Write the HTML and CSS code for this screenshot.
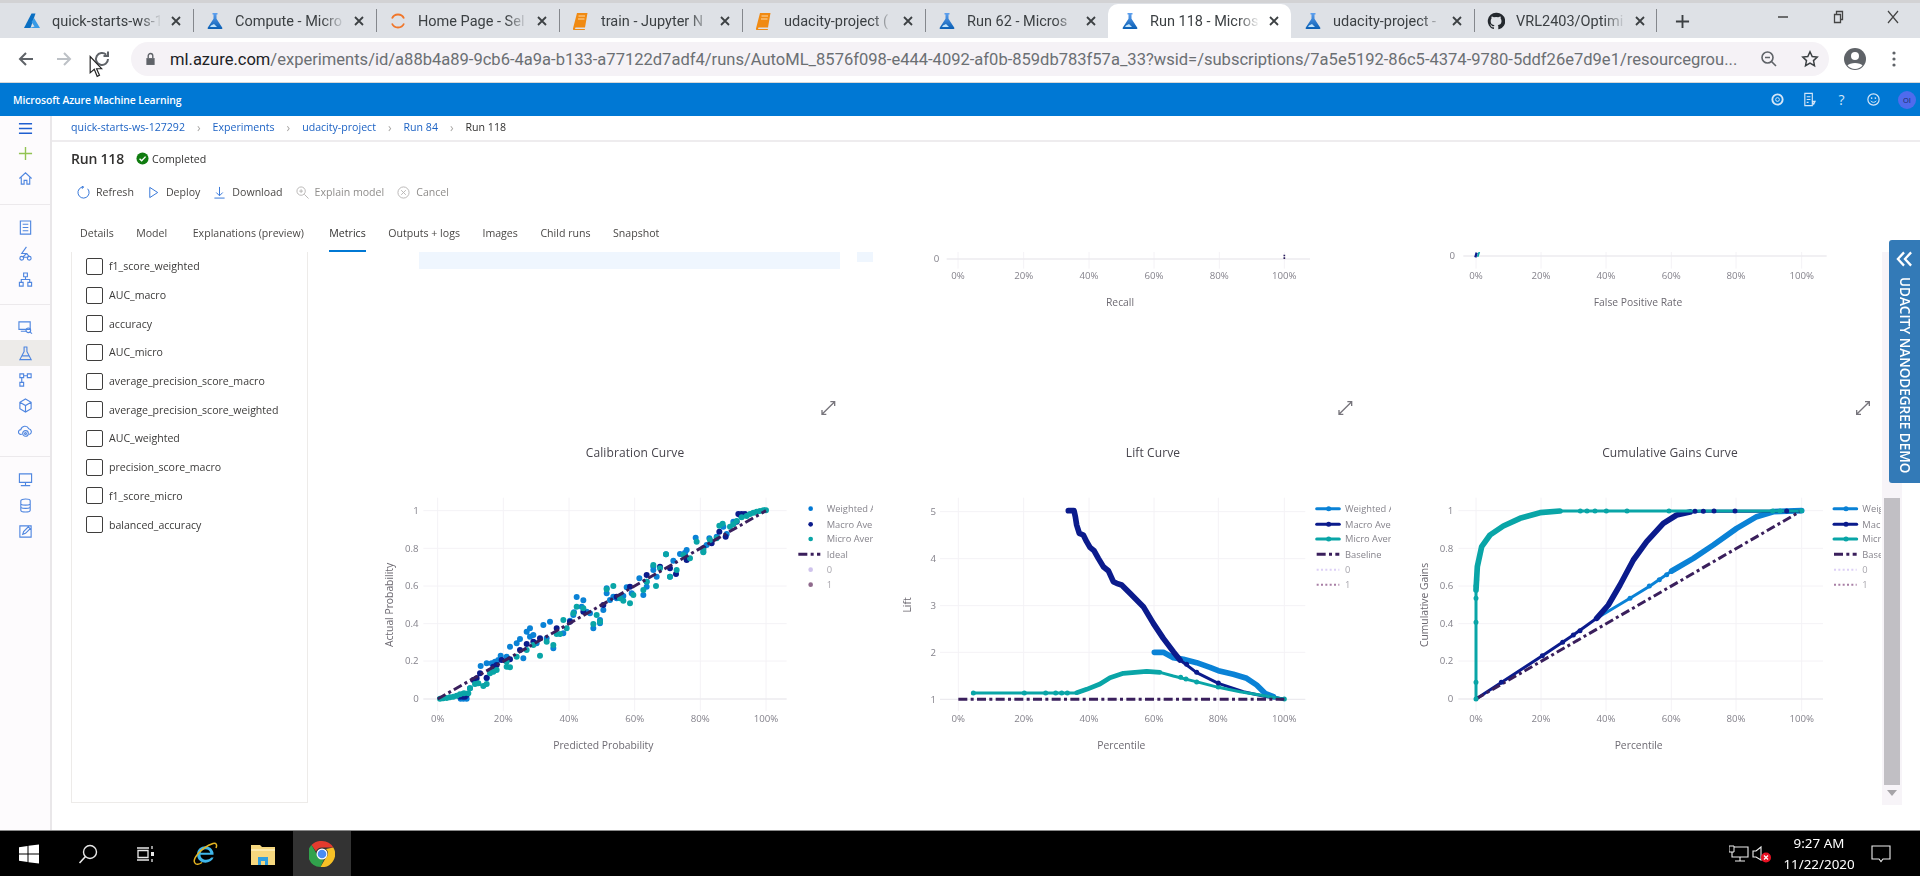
FILE: index.html
```html
<!DOCTYPE html>
<html lang="en">
<head>
<meta charset="utf-8">
<title>Run 118 - Microsoft Azure Machine Learning</title>
<link rel="stylesheet" href="styles.css">
</head>
<body>
<svg class="defs" width="0" height="0" aria-hidden="true">
  <defs>
    <linearGradient id="flaskGrad" x1="0" y1="0" x2="0" y2="1"><stop offset="0" stop-color="#5ea0ef"/><stop offset="1" stop-color="#0a5fb4"/></linearGradient>
    <symbol id="flask" viewBox="0 0 18 18"><path d="M6.500 1h5v1.500h-1v4.200l5.800 9.100c.4.700 0 1.200-.7 1.200H2.400c-.7 0-1.100-.5-.7-1.200l5.800-9.100V2.500h-1z" fill="url(#flaskGrad)"/><path d="M5 13.500l3-1.500 3 3H4z" fill="#bfe3fb"/></symbol>
    <symbol id="book" viewBox="0 0 18 18"><path d="M5 1h10.500l-2.500 14.500H3.500L3 17h10l-.3 1H2c-.8 0-1.200-.6-1-1.500z" fill="#f08a12"/><path d="M6.500 4h6.500M6 7h6.500" stroke="#ffd9a6" stroke-width="1.200"/></symbol>
    <symbol id="close" viewBox="0 0 12 12"><path d="M2 2l8 8M10 2l-8 8" stroke="#3c4043" stroke-width="1.800" fill="none"/></symbol>
  </defs>
</svg>
<div class="screen">
  <div class="tabstrip">
    <div class="tab"><svg class="tab-icon" viewBox="0 0 18 18"><path d="M8.500 1.500h4l-5 14.500H1z" fill="#0a6fc2"/><path d="M11 6l6 10H6.500l5-1.500-3-4.500z" fill="#3a9be6"/></svg><span class="tab-title">quick-starts-ws-1</span><svg class="tab-close"><use href="#close"/></svg></div>
    <div class="tab sep"><svg class="tab-icon"><use href="#flask"/></svg><span class="tab-title">Compute - Micro</span><svg class="tab-close"><use href="#close"/></svg></div>
    <div class="tab sep"><svg class="tab-icon" viewBox="0 0 18 18"><path d="M3 6.500a6.500 6.500 0 0 1 12 0M15 11.500a6.500 6.500 0 0 1-12 0" fill="none" stroke="#f0762a" stroke-width="1.800"/></svg><span class="tab-title">Home Page - Sel</span><svg class="tab-close"><use href="#close"/></svg></div>
    <div class="tab sep"><svg class="tab-icon"><use href="#book"/></svg><span class="tab-title">train - Jupyter N</span><svg class="tab-close"><use href="#close"/></svg></div>
    <div class="tab sep"><svg class="tab-icon"><use href="#book"/></svg><span class="tab-title">udacity-project (</span><svg class="tab-close"><use href="#close"/></svg></div>
    <div class="tab sep"><svg class="tab-icon"><use href="#flask"/></svg><span class="tab-title">Run 62 - Micros</span><svg class="tab-close"><use href="#close"/></svg></div>
    <div class="tab active"><svg class="tab-icon"><use href="#flask"/></svg><span class="tab-title">Run 118 - Micros</span><svg class="tab-close"><use href="#close"/></svg></div>
    <div class="tab"><svg class="tab-icon"><use href="#flask"/></svg><span class="tab-title">udacity-project -</span><svg class="tab-close"><use href="#close"/></svg></div>
    <div class="tab sep after"><svg class="tab-icon" viewBox="0 0 18 18"><path d="M9 .8a8.400 8.400 0 0 0-2.700 16.300c.4.100.6-.2.6-.4v-1.500c-2.300.5-2.800-1-2.800-1-.4-1-.9-1.200-.9-1.200-.8-.5.100-.5.100-.5.800.100 1.300.9 1.300.9.700 1.300 1.900.9 2.400.7.100-.5.300-.9.500-1.100-1.900-.2-3.800-.9-3.800-4.100 0-.9.300-1.700.9-2.300-.1-.2-.4-1.100.1-2.200 0 0 .7-.2 2.300.9a8 8 0 0 1 4.200 0c1.600-1.100 2.300-.9 2.300-.9.500 1.100.2 2 .1 2.200.5.600.9 1.400.9 2.300 0 3.200-2 3.900-3.800 4.100.3.300.6.800.6 1.600v2.300c0 .2.200.5.600.4A8.400 8.400 0 0 0 9 .8z" fill="#24292e"/></svg><span class="tab-title">VRL2403/Optimi</span><svg class="tab-close"><use href="#close"/></svg></div>
    <svg class="newtab" viewBox="0 0 16 16"><path d="M8 1v14M1 8h14" stroke="#3c4043" stroke-width="2"/></svg>
    <div class="winctl">
      <svg viewBox="0 0 14 14"><path d="M2 7h10" stroke="#444" stroke-width="1.500"/></svg>
      <svg viewBox="0 0 14 14"><path d="M3.500 4.500h6v8h-6zM5.500 4.500v-3h6v8h-2" fill="none" stroke="#444" stroke-width="1.300"/></svg>
      <svg viewBox="0 0 14 14"><path d="M2 1l10 12M12 1L2 13" stroke="#444" stroke-width="1.200"/></svg>
    </div>
  </div>

  <div class="toolbar">
    <svg class="nav n-back" viewBox="0 0 18 18"><path d="M16 9H3M9 3L3 9l6 6" fill="none" stroke="#5f6368" stroke-width="2"/></svg>
    <svg class="nav n-fwd" viewBox="0 0 18 18"><path d="M2 9h13M9 3l6 6-6 6" fill="none" stroke="#bdc1c6" stroke-width="2"/></svg>
    <svg class="nav n-reload" viewBox="0 0 18 18"><path d="M15 9a6 6 0 1 1-1.800-4.300M15 1.500v4.500h-4.500" fill="none" stroke="#5f6368" stroke-width="2"/></svg>
    <div class="omnibox">
      <svg class="lock" viewBox="0 0 12 14"><path d="M1.500 6h9v7.500h-9z" fill="#5f6368"/><path d="M3.500 6V3.500a2.500 2.500 0 0 1 5 0V6" fill="none" stroke="#5f6368" stroke-width="1.500"/></svg>
      <span class="url"><b>ml.azure.com</b>/experiments/id/a88b4a89-9cb6-4a9a-b133-a77122d7adf4/runs/AutoML_8576f098-e444-4092-af0b-859db783f57a_33?wsid=/subscriptions/7a5e5192-86c5-4374-9780-5ddf26e7d9e1/resourcegrou...</span>
      <svg class="omni-ic" viewBox="0 0 18 18"><circle cx="7.500" cy="7.500" r="5.500" fill="none" stroke="#5f6368" stroke-width="1.600"/><path d="M11.500 11.500L16 16M5 7.500h5" stroke="#5f6368" stroke-width="1.600"/></svg>
      <svg class="omni-ic" viewBox="0 0 18 18"><path d="M9 1.800l2.200 4.700 5 .6-3.700 3.500 1 5.100L9 13.200l-4.500 2.500 1-5.100L1.800 7.100l5-.6z" fill="none" stroke="#3c4043" stroke-width="1.500"/></svg>
    </div>
    <svg class="profile" viewBox="0 0 24 24"><circle cx="12" cy="12" r="11" fill="#5f6368"/><circle cx="12" cy="9" r="4" fill="#fff"/><path d="M4.500 18.500c2-3.500 13-3.500 15 0a10 10 0 0 1-15 0z" fill="#fff"/></svg>
    <svg class="kebab" viewBox="0 0 4 18"><circle cx="2" cy="3" r="1.600" fill="#5f6368"/><circle cx="2" cy="9" r="1.600" fill="#5f6368"/><circle cx="2" cy="15" r="1.600" fill="#5f6368"/></svg>
  </div>

  <header class="azure">
    <span class="brand">Microsoft Azure Machine Learning</span>
    <div class="azure-icons">
      <svg viewBox="0 0 16 16"><circle cx="8" cy="8" r="5.500" fill="none" stroke="#d5e6f7" stroke-width="2"/><circle cx="8" cy="8" r="2" fill="none" stroke="#d5e6f7"/></svg>
      <svg viewBox="0 0 16 16"><path d="M3 1.500h8v13H3zM5 5h4M5 8h4M5 11h2M11 10l3 0-1.500 3z" fill="none" stroke="#d5e6f7" stroke-width="1.200"/></svg>
      <span class="help">?</span>
      <svg viewBox="0 0 16 16"><circle cx="8" cy="8" r="6" fill="none" stroke="#d5e6f7" stroke-width="1.300"/><path d="M5 9.500c1.500 2 4.500 2 6 0" fill="none" stroke="#d5e6f7"/><circle cx="6" cy="6.500" r=".9" fill="#d5e6f7"/><circle cx="10" cy="6.500" r=".9" fill="#d5e6f7"/></svg>
      <span class="avatar">OI</span>
    </div>
  </header>

  <div class="workspace">
    <nav class="rail">
      <div class="rail-group first">
        <div class="rail-item tight"><svg viewBox="0 0 16 16"><path d="M1 3h14M1 8h14M1 13h14" stroke="#1f5fd0" stroke-width="1.500"/></svg></div>
        <div class="rail-item tight"><svg viewBox="0 0 16 16"><path d="M8 1v14M1 8h14" class="plus"/></svg></div>
        <div class="rail-item tight"><svg viewBox="0 0 16 16"><path d="M1.500 8L8 2l6.500 6M3.500 7v7h3v-4h3v4h3V7" fill="none"/></svg></div>
      </div>
      <div class="rail-group">
        <div class="rail-item"><svg viewBox="0 0 16 16"><path d="M2.500 1h11v14h-11zM5 4.500h6M5 8h6M5 11.500h6" fill="none"/></svg></div>
        <div class="rail-item"><svg viewBox="0 0 16 16"><path d="M9 1L4 8h5l-4 4M5 12h6"/><circle cx="4" cy="13" r="2"/><circle cx="12" cy="13" r="2"/><path d="M9 8l3 3"/></svg></div>
        <div class="rail-item"><svg viewBox="0 0 16 16"><path d="M6 1h4v4H6zM1.500 11h4v4h-4zM10.500 11h4v4h-4zM8 5v3M3.500 11V8h9v3"/></svg></div>
      </div>
      <div class="rail-group">
        <div class="rail-item"><svg viewBox="0 0 16 16"><path d="M1 2h12v8H1zM3 12h6"/><circle cx="11" cy="11" r="2.500"/><path d="M13 13l2 1.500"/></svg></div>
        <div class="rail-item selected"><svg viewBox="0 0 16 16"><path d="M6 1h4M6.500 1v5L2 14.500h12L9.500 6V1M4.500 10.500h7"/></svg></div>
        <div class="rail-item"><svg viewBox="0 0 16 16"><path d="M2 2h4v4H2zM10 2h4v4h-4zM2 11h4v4H2zM6 4h4M4 6v5"/></svg></div>
        <div class="rail-item"><svg viewBox="0 0 16 16"><path d="M8 1l6 3.500v7L8 15l-6-3.500v-7zM2 4.500L8 8l6-3.500M8 8v7"/></svg></div>
        <div class="rail-item"><svg viewBox="0 0 16 16"><path d="M4 11H3a2.500 2.500 0 0 1 0-5 4.500 4.500 0 0 1 8.500-1 3.200 3.200 0 0 1 1 6H12"/><circle cx="8" cy="10" r="3"/><circle cx="8" cy="10" r="1"/></svg></div>
      </div>
      <div class="rail-group last">
        <div class="rail-item"><svg viewBox="0 0 16 16"><path d="M1.500 2h13v9h-13zM8 11v3M3 14.500h10"/></svg></div>
        <div class="rail-item"><svg viewBox="0 0 16 16"><path d="M3 3c0-2.500 10-2.500 10 0v10c0 2.500-10 2.500-10 0zM3 6.500c2 1.500 8 1.500 10 0M3 10c2 1.500 8 1.500 10 0"/></svg></div>
        <div class="rail-item"><svg viewBox="0 0 16 16"><path d="M2 2h12v12H2zM5 11l1-3 5-5 2 2-5 5z"/></svg></div>
      </div>
    </nav>

    <main class="content">
      <div class="crumbs">
        <a>quick-starts-ws-127292</a><i>›</i><a>Experiments</a><i>›</i><a>udacity-project</a><i>›</i><a>Run 84</a><i>›</i><span>Run 118</span>
      </div>
      <div class="title-row">
        <h1>Run 118</h1>
        <svg class="ok" viewBox="0 0 14 14"><circle cx="7" cy="7" r="6.500" fill="#107c10"/><path d="M3.800 7.200l2.300 2.300 4.200-4.500" fill="none" stroke="#fff" stroke-width="1.500"/></svg>
        <span class="status">Completed</span>
      </div>
      <div class="actions">
        <span class="act"><svg viewBox="0 0 14 14"><path d="M11.500 3A6 6 0 1 1 7 1M7 1L5 0M7 1L5.500 3" fill="none" stroke="#2b6fd6"/></svg>Refresh</span>
        <span class="act"><svg viewBox="0 0 14 14"><path d="M3 1.500L11.500 7 3 12.500z" fill="none" stroke="#2b6fd6"/></svg>Deploy</span>
        <span class="act"><svg viewBox="0 0 14 14"><path d="M7 1v9M3.500 7L7 10.500 10.500 7M1.500 13h11" fill="none" stroke="#2b6fd6"/></svg>Download</span>
        <span class="act off"><svg viewBox="0 0 14 14"><circle cx="5.500" cy="5.500" r="4.500" fill="none" stroke="#b5b3b2"/><path d="M9 9l4.500 4.500M3.500 5.500h4M5.500 3.500v4" stroke="#b5b3b2" fill="none"/></svg>Explain model</span>
        <span class="act off"><svg viewBox="0 0 14 14"><circle cx="7" cy="7" r="6" fill="none" stroke="#b5b3b2"/><path d="M4.500 4.500l5 5M9.500 4.500l-5 5" stroke="#b5b3b2"/></svg>Cancel</span>
      </div>
      <div class="tabs">
        <span>Details</span><span>Model</span><span class="wide">Explanations (preview)</span><span class="on wide">Metrics</span><span>Outputs + logs</span><span>Images</span><span>Child runs</span><span>Snapshot</span>
      </div>

      <div class="metrics">
        <aside class="panel">
          <label class="check"><i></i>f1_score_weighted</label>
          <label class="check"><i></i>AUC_macro</label>
          <label class="check"><i></i>accuracy</label>
          <label class="check"><i></i>AUC_micro</label>
          <label class="check"><i></i>average_precision_score_macro</label>
          <label class="check"><i></i>average_precision_score_weighted</label>
          <label class="check"><i></i>AUC_weighted</label>
          <label class="check"><i></i>precision_score_macro</label>
          <label class="check"><i></i>f1_score_micro</label>
          <label class="check"><i></i>balanced_accuracy</label>
        </aside>

        <div class="charts">
          <div class="chart-row top">
            <svg class="c1" viewBox="0 0 1509 534">
              <rect x="147" y="0" width="1263" height="51" fill="#eff6fe"/>
              <rect x="1461" y="0" width="48" height="30" fill="#eff6fe"/>
              <path class="expand" d="M1356 487l38-38M1356 474v13h13M1381 449h13v13"/>
            </svg>
            <svg class="c2" viewBox="0 0 1503 534">
              <path class="grid" d="M204 0v50M401 0v50M597 0v50M792 0v50M988 0v50M1183 0v50"/>
              <path class="zero" d="M170 21h1090"/>
              <text class="tick end" x="148" y="31">0</text>
              <text class="tick mid" x="204" y="82">0%</text><text class="tick mid" x="401" y="82">20%</text><text class="tick mid" x="597" y="82">40%</text><text class="tick mid" x="792" y="82">60%</text><text class="tick mid" x="988" y="82">80%</text><text class="tick mid" x="1183" y="82">100%</text>
              <text class="axis mid" x="690" y="163">Recall</text>
              <path d="M1183 8v14" stroke="#2b1d5c" stroke-width="5" stroke-dasharray="5 3"/>
              <path class="expand" d="M1347 487l38-38M1347 474v13h13M1372 449h13v13"/>
            </svg>
            <svg class="c3" viewBox="0 0 1443 534">
              <path class="grid" d="M228 0v50M423 0v50M618 0v50M814 0v50M1008 0v50M1205 0v50"/>
              <path class="zero" d="M190 12h1090"/>
              <text class="tick end" x="165" y="22">0</text>
              <text class="tick mid" x="228" y="82">0%</text><text class="tick mid" x="423" y="82">20%</text><text class="tick mid" x="618" y="82">40%</text><text class="tick mid" x="814" y="82">60%</text><text class="tick mid" x="1008" y="82">80%</text><text class="tick mid" x="1205" y="82">100%</text>
              <text class="axis mid" x="714" y="163">False Positive Rate</text>
              <path d="M226 16l4-14" stroke="#0b1b8c" stroke-width="7"/><path d="M233 14l5-14" stroke="#09a5a7" stroke-width="5"/>
              <path class="expand" d="M1370 487l38-38M1370 474v13h13M1395 449h13v13"/>
            </svg>
          </div>
          <div class="chart-row">
            <svg class="c1 tall" viewBox="0 0 1509 1020">
              <text class="ctitle mid" x="795" y="80">Calibration Curve</text>
              <path class="grid" d="M203 203v640M400 203v640M597 203v640M794 203v640M991 203v640M1188 203v640M160 242h1090M160 355h1090M160 468h1090M160 581h1090M160 693h1090"/>
              <path class="zero" d="M160 807h1090"/>
              <text class="tick end" x="146" y="252">1</text><text class="tick end" x="146" y="365">0.8</text><text class="tick end" x="146" y="478">0.6</text><text class="tick end" x="146" y="591">0.4</text><text class="tick end" x="146" y="703">0.2</text><text class="tick end" x="146" y="817">0</text>
              <text class="tick mid" x="203" y="875">0%</text><text class="tick mid" x="400" y="875">20%</text><text class="tick mid" x="597" y="875">40%</text><text class="tick mid" x="794" y="875">60%</text><text class="tick mid" x="991" y="875">80%</text><text class="tick mid" x="1188" y="875">100%</text>
              <text class="axis mid" x="700" y="957">Predicted Probability</text>
              <text class="axis mid" transform="translate(70 525) rotate(-90)">Actual Probability</text>
              <path class="dots weighted" d="M332 708h0M350 745h0M375 695h0M392 677h0M420 650h0M450 627h0M470 605h0M480 595h0M490 615h0M500 640h0M520 585h0M540 575h0M550 655h0M580 610h0M612 547h0M620 501h0M640 511h0M650 545h0M670 595h0M690 580h0M700 540h0M710 475h0M720 510h0M740 505h0M770 472h0M785 490h0M808 445h0M820 495h0M830 455h0M850 410h0M850 420h0M888 373h0M910 392h0M930 372h0M950 360h0M977 323h0M1000 365h0M1018 325h0M1060 290h0M1110 255h0M272 806h0M280 806h0M290 806h0M300 775h0M350 700h0M365 700h0M385 690h0M410 680h0M460 685h0M530 625h0M600 572h0M660 550h0M730 500h0M760 498h0M860 440h0M900 440h0M1070 312h0M440 640h0M480 620h0M610 555h0M635 530h0M690 570h0M830 470h0M710 490h0M945 368h0M1010 345h0M1040 320h0M1090 275h0"/>
              <path class="dots macro" d="M270 800h0M278 800h0M285 800h0M290 795h0M310 750h0M330 730h0M350 743h0M370 710h0M395 690h0M420 688h0M450 660h0M470 642h0M490 635h0M510 625h0M560 595h0M600 575h0M640 545h0M700 525h0M740 500h0M780 470h0M830 435h0M870 410h0M900 415h0M918 432h0M950 390h0M1000 355h0M1025 340h0M1048 305h0M1067 320h0M1100 275h0M1105 252h0M1115 252h0M1125 252h0M320 745h0M380 705h0"/>
              <path class="dots micro" d="M210 806h0M220 805h0M230 804h0M240 802h0M250 800h0M260 797h0M270 793h0M282 790h0M295 790h0M300 775h0M315 762h0M325 760h0M340 768h0M350 762h0M360 730h0M370 725h0M380 720h0M410 710h0M420 712h0M440 680h0M470 660h0M490 645h0M510 677h0M530 635h0M550 645h0M560 612h0M580 570h0M590 595h0M610 550h0M620 530h0M640 535h0M670 582h0M690 575h0M680 555h0M710 478h0M730 468h0M760 512h0M780 520h0M790 495h0M820 480h0M830 455h0M858 468h0M850 405h0M870 415h0M888 373h0M900 440h0M920 420h0M940 375h0M960 385h0M980 335h0M1000 367h0M1020 330h0M1048 287h0M1058 281h0M1080 290h0M1100 273h0M1115 262h0M1130 258h0M1150 248h0M1170 243h0M1188 241h0M1000 360h0M1040 325h0M1090 283h0M1140 252h0M1160 245h0M1180 241h0M750 505h0M570 612h0M410 695h0"/>
              <path class="ideal" d="M203 807L1188 242"/>
              <circle cx="1322" cy="236" r="7" fill="#0078d4"/><circle cx="1322" cy="283" r="7" fill="#0b1b8c"/><circle cx="1322" cy="327" r="7" fill="#09a5a7"/>
              <path class="ideal" d="M1285 373h66"/>
              <circle cx="1322" cy="419" r="7" fill="#cfc3ec"/><circle cx="1322" cy="464" r="7" fill="#8f6a8c"/>
              <text class="leg" x="1370" y="246">Weighted A</text><text class="leg" x="1370" y="293">Macro Avera</text><text class="leg" x="1370" y="337">Micro Avera</text><text class="leg" x="1370" y="383">Ideal</text><text class="leg pale" x="1370" y="429">0</text><text class="leg pale" x="1370" y="474">1</text>
            </svg>
            <svg class="c2 tall" viewBox="0 0 1503 1020">
              <text class="ctitle mid" x="789" y="80">Lift Curve</text>
              <path class="grid" d="M205 203v640M401 203v640M597 203v640M792 203v640M985 203v640M1183 203v640M150 245h1096M150 386h1096M150 527h1096M150 667h1096"/>
              <path class="zero" d="M150 808h1096"/>
              <text class="tick end" x="138" y="255">5</text><text class="tick end" x="138" y="396">4</text><text class="tick end" x="138" y="537">3</text><text class="tick end" x="138" y="677">2</text><text class="tick end" x="138" y="818">1</text>
              <text class="tick mid" x="205" y="875">0%</text><text class="tick mid" x="401" y="875">20%</text><text class="tick mid" x="597" y="875">40%</text><text class="tick mid" x="792" y="875">60%</text><text class="tick mid" x="985" y="875">80%</text><text class="tick mid" x="1183" y="875">100%</text>
              <text class="axis mid" x="694" y="957">Percentile</text>
              <text class="axis mid" transform="translate(62 525) rotate(-90)">Lift</text>
              <path class="line weighted-l thick" d="M793 667H820L850 683 880 688 920 698 960 712 985 722 1030 733 1070 745 1100 765 1125 790 1150 800"/>
              <path class="line weighted-l" d="M1150 800L1183 808"/>
              <path class="line macro-l thick" d="M535 242H552L556 260 560 285 568 310 580 315 590 335 600 352 612 362 625 385 640 410 655 422 670 455 680 460 695 465 720 490 760 530 790 580 820 625 850 665 870 690"/>
              <path class="line macro-l" d="M870 690L890 705 920 728 985 760 1060 785 1130 800 1183 808"/>
              <path class="line micro-l" d="M250 789H560L590 778 630 762 660 743 700 730 770 724 810 727 850 738 890 748 930 758 985 772 1050 785 1110 795 1183 808"/>
              <path class="line micro-l mid-w" d="M560 788L590 778 630 762 660 743 700 730 770 724 810 727"/>
              <path class="dots micro small" d="M250 789h0M403 789h0M467 789h0M497 789h0M515 789h0M532 789h0M872 742h0M888 747h0M920 756h0M985 771h0M1183 807h0"/>
              <path class="dots macro small" d="M890 703h0M920 727h0M985 759h0"/>
              <path class="ideal" d="M205 808H1183"/>
              <path class="line weighted-l" d="M1280 236h68"/><path class="line macro-l" d="M1280 283h68"/><path class="line micro-l" d="M1280 327h68"/><path class="ideal" d="M1280 373h68"/>
              <path class="dots weighted small" d="M1316 236h0"/><path class="dots macro small" d="M1316 283h0"/><path class="dots micro small" d="M1316 327h0"/>
              <path class="dotted p0" d="M1280 419h68"/><path class="dotted p1" d="M1280 464h68"/>
              <text class="leg" x="1365" y="246">Weighted A</text><text class="leg" x="1365" y="293">Macro Aver</text><text class="leg" x="1365" y="337">Micro Avera</text><text class="leg" x="1365" y="383">Baseline</text><text class="leg pale" x="1365" y="429">0</text><text class="leg pale" x="1365" y="474">1</text>
            </svg>
            <svg class="c3 tall" viewBox="0 0 1443 1020">
              <text class="ctitle mid" x="810" y="80">Cumulative Gains Curve</text>
              <path class="grid" d="M228 203v640M423 203v640M618 203v640M814 203v640M1008 203v640M1205 203v640M175 242h1094M175 355h1094M175 468h1094M175 581h1094M175 693h1094"/>
              <path class="zero" d="M175 807h1094"/>
              <text class="tick end" x="160" y="252">1</text><text class="tick end" x="160" y="365">0.8</text><text class="tick end" x="160" y="478">0.6</text><text class="tick end" x="160" y="591">0.4</text><text class="tick end" x="160" y="703">0.2</text><text class="tick end" x="160" y="817">0</text>
              <text class="tick mid" x="228" y="875">0%</text><text class="tick mid" x="423" y="875">20%</text><text class="tick mid" x="618" y="875">40%</text><text class="tick mid" x="814" y="875">60%</text><text class="tick mid" x="1008" y="875">80%</text><text class="tick mid" x="1205" y="875">100%</text>
              <text class="axis mid" x="716" y="957">Percentile</text>
              <text class="axis mid" transform="translate(84 525) rotate(-90)">Cumulative Gains</text>
              <path class="line weighted-l" d="M590 565L690 505 750 468 815 423"/>
              <path class="line weighted-l thick" d="M815 423L880 385 940 345 1010 295 1070 260 1120 245 1205 242"/>
              <path class="line macro-l" d="M228 807L427 677 520 615 590 565"/>
              <path class="line macro-l thick" d="M590 565L625 525 660 465 700 390 740 335 790 280 830 255 870 246"/>
              <path class="line macro-l" d="M870 246L900 244H1205"/>
              <path class="line micro-l" d="M228 807V480M480 243H1205"/>
              <path class="line micro-l thick" d="M228 480L232 410 245 350 270 315 310 288 360 265 420 248 480 243"/>
              <path class="ideal" d="M228 807L1205 242"/>
              <path class="dots micro small" d="M228 807h0M228 757h0M228 577h0M228 505h0M228 468h0M230 450h0M541 243h0M561 243h0M585 243h0M619 243h0M681 243h0M807 243h0M1118 243h0M1140 243h0M1205 242h0"/>
              <path class="dots macro small" d="M304 757h0M427 677h0M488 637h0M520 615h0M540 602h0M885 244h0M910 244h0M942 243h0M1005 243h0M1160 243h0"/>
              <path class="dots weighted small" d="M690 505h0M748 468h0M778 449h0M800 434h0"/>
              <path class="line weighted-l" d="M1302 236h68"/><path class="line macro-l" d="M1302 283h68"/><path class="line micro-l" d="M1302 327h68"/><path class="ideal" d="M1302 373h68"/>
              <path class="dots weighted small" d="M1338 236h0"/><path class="dots macro small" d="M1338 283h0"/><path class="dots micro small" d="M1338 327h0"/>
              <path class="dotted p0" d="M1302 419h68"/><path class="dotted p1" d="M1302 464h68"/>
              <text class="leg" x="1387" y="246">Weig</text><text class="leg" x="1387" y="293">Macr</text><text class="leg" x="1387" y="337">Micr</text><text class="leg" x="1387" y="383">Base</text><text class="leg pale" x="1387" y="429">0</text><text class="leg pale" x="1387" y="474">1</text>
            </svg>
          </div>
        </div>
      </div>

      <div class="scrollbar"><div class="thumb"></div><div class="arrow"></div></div>
      <div class="side-tab">
        <svg viewBox="0 0 18 16"><path d="M8.500 1L2 8l6.500 7M16 1L9.500 8l6.500 7" fill="none" stroke="#fff" stroke-width="2.400"/></svg>
        <span>UDACITY NANODEGREE DEMO</span>
      </div>
    </main>
  </div>

  <footer class="taskbar">
    <div class="tb"><svg viewBox="0 0 20 20"><path d="M0 3.200l8.500-1.200v7.500H0zM9.500 1.800L20 .5v9H9.500zM0 10.500h8.500V18L0 16.800zM9.500 10.500H20v9l-10.500-1.300z" fill="#fff"/></svg></div>
    <div class="tb"><svg viewBox="0 0 20 20"><circle cx="12" cy="8" r="6.500" fill="none" stroke="#e8e8e8" stroke-width="1.400"/><path d="M7.500 12.500L1.500 19" stroke="#e8e8e8" stroke-width="1.600"/></svg></div>
    <div class="tb"><svg viewBox="0 0 20 20"><path d="M1 4h12M1 16h12M2 6.500h10v7H2zM16 2v3M16 15v3" fill="none" stroke="#e8e8e8" stroke-width="1.300"/><path d="M15 8h3v4h-3z" fill="#e8e8e8"/></svg></div>
    <div class="tb"><svg class="big" viewBox="0 0 26 26"><path d="M21.500 13.800H8.500c0 5.500 7.500 6.500 10.800 2.800h2.300c-3 7.500-16.500 7-16.500-3.300 0-9.500 14-11.300 16.400-1.500M8.700 11.800h9.600C17 7 9.800 7.300 8.700 11.800z" fill="#3fb6ea"/><path d="M3 22C0 19 8 7 21 2.500c3-1 4.500 1 3 4.500M3 22c1 2 4 1.500 7-.5" fill="none" stroke="#e4b422" stroke-width="1.500"/></svg></div>
    <div class="tb"><svg class="big" viewBox="0 0 26 26"><path d="M1 4h9l2 2h13v18H1z" fill="#f5d77e"/><path d="M1 8h24v2H1z" fill="#fbe9ad"/><path d="M8 24v-8h10v8h-3v-4h-4v4z" fill="#2e9fe0"/></svg></div>
    <div class="tb hot"><svg class="big" viewBox="0 0 26 26"><path d="M13 0a13 13 0 0 1 11.300 6.500H13a6.500 6.500 0 0 0-6 4L2.500 4A13 13 0 0 1 13 0z" fill="#e33b2e"/><path d="M2.500 4L8 13.500a5.500 5.500 0 0 0 7 4.800L11.500 26A13 13 0 0 1 2.500 4z" fill="#31a24c"/><path d="M24.300 6.500A13 13 0 0 1 11.500 26L17 16.500a5.500 5.500 0 0 0 0-8.500z" fill="#f6c026"/><circle cx="13" cy="13" r="5.500" fill="#fff"/><circle cx="13" cy="13" r="4.300" fill="#4a8bf5"/></svg></div>
    <div class="tray">
      <svg class="t-net" viewBox="0 0 20 18"><path d="M3 2h16v10H3zM11 12v4M6 16h10" fill="none" stroke="#eee" stroke-width="1.100"/><path d="M0 1h5v6H0z" fill="#000" stroke="#eee"/></svg>
      <svg class="t-vol" viewBox="0 0 20 18"><path d="M1 6h3l5-4v13l-5-3H1z" fill="none" stroke="#eee" stroke-width="1.100"/><circle cx="14" cy="12.500" r="5" fill="#e81123"/><path d="M12 10.500l4 4M16 10.500l-4 4" stroke="#fff" stroke-width="1.200"/></svg>
      <div class="clock"><span>9:27 AM</span><span>11/22/2020</span></div>
      <svg class="t-note" viewBox="0 0 20 18"><path d="M1 1h18v13h-7l-2 2.500L8 14H1z" fill="none" stroke="#eee" stroke-width="1.100"/></svg>
    </div>
  </footer>
  <svg class="cursor" viewBox="0 0 12 20"><path d="M1 1v14l3.500-3 2.500 6 2-1-2.500-5.500H11z" fill="#fff" stroke="#222"/></svg>
</div>
</body>
</html>
```
FILE: styles.css
```css
* { box-sizing: border-box; }
html, body { margin: 0; height: 100%; background: #fff; overflow: hidden; }
.defs { position: absolute; }
.screen {
  position: relative;
  width: 1920px; height: 876px;
  display: flex; flex-direction: column;
  font-family: "Open Sans", "Noto Sans", sans-serif;
  color: #323130;
  overflow: hidden;
  filter: blur(.55px);
}

/* browser tabs */
.tabstrip {
  height: 38px; flex: none;
  background: #dee1e6;
  border-top: 3px solid #d2d2d4;
  padding: 1px 0 0 10px;
  display: flex; align-items: stretch;
  position: relative;
}
.tab {
  width: 183px; height: 34px; flex: none;
  display: flex; align-items: center;
  padding: 0 11px 0 13px;
  position: relative;
  font: 14.5px "Roboto", sans-serif;
  color: #3c4043;
}
.tab.sep::before, .tab.after::after {
  content: ""; position: absolute;
  top: 5px; bottom: 6px; width: 1px; background: #84878c;
}
.tab.sep::before { left: 0; }
.tab.after::after { right: 0; }
.tab.active { background: #fff; border-radius: 10px 10px 0 0; }
.tab-icon { width: 18px; height: 18px; flex: none; }
.tab-title {
  flex: 1; min-width: 0; margin-left: 11px;
  white-space: nowrap;
  -webkit-mask-image: linear-gradient(90deg, #000 80%, transparent 100%);
  mask-image: linear-gradient(90deg, #000 80%, transparent 100%);
}
.tab-close { width: 12px; height: 12px; flex: none; margin-left: 8px; }
.newtab { width: 15px; height: 15px; margin: 10px 0 0 18px; flex: none; }
.winctl { margin-left: auto; display: flex; gap: 41px; padding: 6px 20px 0 0; }
.winctl svg { width: 14px; height: 14px; }

/* browser toolbar */
.toolbar {
  height: 45px; flex: none;
  background: #fff; border-bottom: 1px solid #d8d8d8;
  display: flex; align-items: center;
  padding: 0 0 2px 17px;
}
.nav { width: 18px; height: 18px; flex: none; margin-right: 20px; }
.omnibox {
  width: 1698px; height: 34px; flex: none;
  background: #f5f2f6; border-radius: 17px;
  display: flex; align-items: center;
  padding-left: 14px;
}
.lock { width: 11px; height: 14px; flex: none; margin-right: 14px; }
.url {
  width: 1569px; flex: none; white-space: nowrap;
  font: 16.55px "Roboto", sans-serif; color: #6b6f73;
}
.url b { font-weight: 400; color: #202124; }
.omni-ic { width: 18px; height: 18px; flex: none; margin-left: 23px; }
.url + .omni-ic { margin-left: 21px; }
.profile { width: 24px; height: 24px; flex: none; margin-left: 14px; }
.kebab { width: 4px; height: 18px; flex: none; margin-left: 25px; }

/* azure bar */
.azure {
  height: 33px; flex: none;
  background: #0078d4;
  display: flex; align-items: center; justify-content: space-between;
  padding: 0 4px 0 13px; color: #fff;
}
.brand { font-size: 10.4px; font-weight: 600; letter-spacing: -.1px; }
.azure-icons { display: flex; align-items: center; gap: 17px; }
.azure-icons svg { width: 15px; height: 15px; }
.help { width: 15px; text-align: center; font-size: 14px; color: #d5e6f7; }
.avatar {
  width: 18px; height: 18px; border-radius: 50%;
  background: #4f6bed; color: #1b2a66;
  font-size: 7.5px; display: flex; align-items: center; justify-content: center;
}

/* layout */
.workspace { flex: 1; min-height: 0; display: flex; }
.rail {
  width: 52px; flex: none;
  background: #fdfbfd; border-right: 2px solid #e9e7e9;
}
.rail-group { padding: 9px 0 12px; border-bottom: 1px solid #ece9ec; }
.rail-group.first { padding: 0 0 13px; }
.rail-group.last { border-bottom: 0; }
.rail-item { height: 26px; display: flex; align-items: center; justify-content: center; }
.rail-item.tight { height: 25px; }
.rail-item.selected { background: #edebe9; }
.rail-item svg { width: 15px; height: 15px; fill: none; stroke: #4f86e0; stroke-width: 1.200; }
.rail-item svg .plus { stroke: #92c353; stroke-width: 1.500; }

.content { flex: 1; min-width: 0; display: flex; flex-direction: column; position: relative; }
.crumbs {
  height: 26px; flex: none;
  border-bottom: 2px solid #eeecee;
  padding: 0 0 2px 19px;
  display: flex; align-items: center;
  font-size: 10.6px;
  color: #323130;
}
.crumbs a { color: #1c62c4; }
.crumbs i { font-style: normal; color: #a8a6a4; margin: 0 12px; font-size: 12px; }
.title-row { height: 33px; flex: none; display: flex; align-items: center; padding-left: 19px; }
.title-row h1 { margin: 0; font-size: 14px; font-weight: 600; letter-spacing: -.2px; }
.ok { width: 13px; height: 13px; margin-left: 12px; flex: none; }
.status { font-size: 10.6px; margin-left: 3px; }
.actions { height: 34px; flex: none; display: flex; align-items: center; padding-left: 25px; font-size: 10.6px; gap: 13px; }
.act { display: flex; align-items: center; gap: 6px; color: #4a4846; }
.act svg { width: 13px; height: 13px; }
.act.off { color: #8f8d8b; }
.tabs { height: 43px; flex: none; display: flex; align-items: flex-start; padding: 14px 0 0 28px; gap: 22.5px; font-size: 10.6px; color: #4a4846; }
.tabs span { height: 29px; display: block; padding-top: 3px; }
.tabs .wide { margin-left: 3px; }
.tabs .on { color: #323130; border-bottom: 2px solid #0078d4; }

/* metrics */
.metrics { flex: 1; min-height: 0; display: flex; overflow: hidden; }
.panel {
  width: 237px; height: 551px; flex: none; margin-left: 19px;
  border: 1px solid #edebe9; border-top: 0;
  display: flex; flex-direction: column;
}
.check {
  height: 28.7px; flex: none;
  display: flex; align-items: center;
  padding-left: 14px;
  font-size: 10.6px; color: #3b3a39;
  letter-spacing: -.02px;
}
.check i {
  width: 17px; height: 17px; flex: none; margin-right: 6px;
  border: 1.500px solid #3f3e3d; border-radius: 2px;
}
.charts { flex: 1; min-width: 0; padding-left: 62px; display: flex; flex-direction: column; }
.chart-row { display: flex; flex: none; }
.c1, .c2, .c3 { height: 178px; flex: none; display: block; overflow: hidden; }
.c1 { width: 503px; }
.c2 { width: 501px; margin-left: 17px; }
.c3 { width: 481px; margin-left: 9px; }
.tall { height: 340px; }

/* plot styling */
.grid { stroke: #f4f2f6; stroke-width: 3; fill: none; }
.zero { stroke: #ecebef; stroke-width: 4; fill: none; }
.tick { font: 29px "Open Sans", sans-serif; fill: #85838c; }
.axis { font: 31px "Open Sans", sans-serif; fill: #6d6a72; }
.ctitle { font: 36px "Open Sans", sans-serif; fill: #46444c; letter-spacing: .3px; }
.leg { font: 28px "Open Sans", sans-serif; fill: #86848c; }
.leg.pale { fill: #a9a7ae; }
.mid { text-anchor: middle; }
.end { text-anchor: end; }
.dots { fill: none; stroke-width: 18; stroke-linecap: round; }
.dots.small { stroke-width: 15; }
.weighted { stroke: #0a82d6; }
.macro { stroke: #0b1b8c; }
.micro { stroke: #09a5a7; }
.line { fill: none; stroke-width: 9; stroke-linejoin: round; stroke-linecap: round; }
.line.thick { stroke-width: 17; }
.line.mid-w { stroke-width: 14; }
.weighted-l { stroke: #0a82d6; }
.macro-l { stroke: #0b1b8c; }
.micro-l { stroke: #09a5a7; }
.ideal { fill: none; stroke: #3a1f5c; stroke-width: 9; stroke-dasharray: 27 10 9 10; }
.dotted { fill: none; stroke-width: 6; stroke-dasharray: 6 7; }
.p0 { stroke: #dccff5; }
.p1 { stroke: #a87fa5; }
.expand { fill: none; stroke: #77757c; stroke-width: 4; }

/* overlays */
.scrollbar {
  position: absolute; left: 1830px; top: 136px;
  width: 20px; height: 553px;
  background: #f7f4f8;
}
.thumb { position: absolute; left: 2px; top: 246px; width: 16px; height: 287px; background: #c1bfc4; }
.arrow {
  position: absolute; left: 5px; top: 538px;
  border-left: 5px solid transparent; border-right: 5px solid transparent;
  border-top: 6px solid #a6a4a8;
}
.side-tab {
  position: absolute; left: 1837px; top: 124px;
  width: 31px; height: 243px;
  background: #337ab7; border-radius: 3px 0 0 3px;
  color: #fff;
  display: flex; flex-direction: column; align-items: center;
  padding-top: 11px;
}
.side-tab svg { width: 17px; height: 16px; flex: none; }
.side-tab span {
  writing-mode: vertical-rl; margin-top: 10px;
  font-size: 13.5px; font-weight: 600; white-space: nowrap;
}

/* taskbar */
.taskbar {
  height: 46px; flex: none;
  background: #000; border-top: 1px solid #8a8a8a;
  display: flex; position: relative;
}
.tb { width: 58.5px; height: 100%; display: flex; align-items: center; justify-content: center; }
.tb svg { width: 20px; height: 20px; }
.tb svg.big { width: 26px; height: 26px; }
.tb.hot { background: #333; }
.tray { margin-left: auto; display: flex; align-items: center; padding-right: 29px; }
.t-net { width: 20px; height: 18px; margin-right: 3px; }
.t-vol { width: 20px; height: 18px; margin-right: 7px; }
.clock { width: 80px; display: flex; flex-direction: column; align-items: center; font: 13.4px/21px "Noto Sans", sans-serif; color: #fff; }
.t-note { width: 20px; height: 18px; margin-left: 12px; }

.cursor { position: absolute; left: 89px; top: 55px; width: 14px; height: 24px; }
```
